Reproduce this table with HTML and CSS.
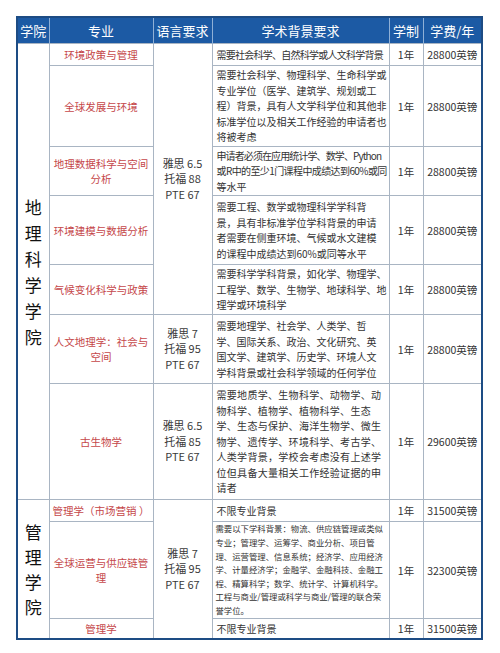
FILE: index.html
```html
<!DOCTYPE html>
<html lang="zh-CN">
<head>
<meta charset="utf-8">
<title>专业申请要求</title>
<link rel="stylesheet" href="styles.css">
</head>
<body>
<div class="frame">
<table class="grid">
<colgroup>
<col class="c-school"><col class="c-major"><col class="c-lang"><col class="c-bg"><col class="c-len"><col class="c-fee">
</colgroup>
<thead>
<tr class="head">
<th class="th-school">学院</th><th>专业</th><th class="th-lang">语言要求</th><th>学术背景要求</th><th>学制</th><th>学费/年</th>
</tr>
</thead>
<tbody>
<tr class="h22">
<td class="school" rowspan="7"><span class="vert">地<br>理<br>科<br>学<br>学<br>院</span></td>
<td class="major">环境政策与管理</td>
<td class="lang" rowspan="5">雅思 6.5<br>托福 88<br>PTE 67</td>
<td class="bg"><span class="tight">需要社会科学、自然科学或人文科学背景</span></td>
<td class="len">1年</td><td class="fee">28800英镑</td>
</tr>
<tr class="h81">
<td class="major">全球发展与环境</td>
<td class="bg">需要社会科学、物理科学、生命科学或<br>专业学位（医学、建筑学、规划或工<br>程）背景，具有人文学科学位和其他非<br>标准学位以及相关工作经验的申请者也<br>将被考虑</td>
<td class="len">1年</td><td class="fee">28800英镑</td>
</tr>
<tr class="h49">
<td class="major">地理数据科学与空间<br>分析</td>
<td class="bg"><span class="tight2">申请者必须在应用统计学、数学、Python</span><br><span class="tight3">或R中的至少1门课程中成绩达到60%或同</span><br>等水平</td>
<td class="len">1年</td><td class="fee">28800英镑</td>
</tr>
<tr class="h69">
<td class="major">环境建模与数据分析</td>
<td class="bg">需要工程、数学或物理科学学科背<br>景，具有非标准学位学科背景的申请<br>者需要在侧重环境、气候或水文建模<br>的课程中成绩达到60%或同等水平</td>
<td class="len">1年</td><td class="fee">28800英镑</td>
</tr>
<tr class="h50">
<td class="major">气候变化科学与政策</td>
<td class="bg">需要科学学科背景，如化学、物理学、<br>工程学、数学、生物学、地球科学、地<br>理学或环境科学</td>
<td class="len">1年</td><td class="fee">28800英镑</td>
</tr>
<tr class="h69">
<td class="major">人文地理学：社会与<br>空间</td>
<td class="lang">雅思 7<br>托福 95<br>PTE 67</td>
<td class="bg">需要地理学、社会学、人类学、哲<br>学、国际关系、政治、文化研究、英<br>国文学、建筑学、历史学、环境人文<br>学科背景或社会科学领域的任何学位</td>
<td class="len">1年</td><td class="fee">28800英镑</td>
</tr>
<tr class="h116">
<td class="major">古生物学</td>
<td class="lang">雅思 6.5<br>托福 85<br>PTE 67</td>
<td class="bg wide">需要地质学、生物科学、动物学、动<br>物科学、植物学、植物科学、生态<br>学、生态与保护、海洋生物学、微生<br>物学、遗传学、环境科学、考古学、<br>人类学背景，学校会考虑没有上述学<br>位但具备大量相关工作经验证据的申<br>请者</td>
<td class="len">1年</td><td class="fee">29600英镑</td>
</tr>
<tr class="h22 split">
<td class="school" rowspan="3"><span class="vert vert-mgmt">管<br>理<br>学<br>院</span></td>
<td class="major">管理学（市场营销 ）</td>
<td class="lang" rowspan="3">雅思 7<br>托福 95<br>PTE 67</td>
<td class="bg">不限专业背景</td>
<td class="len">1年</td><td class="fee">31500英镑</td>
</tr>
<tr class="h97">
<td class="major">全球运营与供应链管<br>理</td>
<td class="bg small">需要以下学科背景：物流、供应链管理或类似<br>专业；管理学、运筹学、商业分析、项目管<br>理、运营管理、信息系统；经济学、应用经济<br>学、计量经济学；金融学、金融科技、金融工<br>程、精算科学；数学、统计学、计算机科学。<br>工程与商业/管理或科学与商业/管理的联合荣<br>誉学位。</td>
<td class="len">1年</td><td class="fee">32300英镑</td>
</tr>
<tr class="h20">
<td class="major">管理学</td>
<td class="bg">不限专业背景</td>
<td class="len">1年</td><td class="fee">31500英镑</td>
</tr>
</tbody>
</table>
</div>
</body>
</html>
```

FILE: styles.css
```css
html, body {
  margin: 0;
  padding: 0;
  background: #ffffff;
}
body {
  padding: 16px 0 0 16px;
  font-family: "Noto Sans CJK SC", "Noto Sans", sans-serif;
  color: #333333;
}
.frame {
  width: 463px;
  border: 2px solid #1d4c84;
  background: #ffffff;
}
.grid {
  width: 463px;
  table-layout: fixed;
  border-collapse: collapse;
  border-style: hidden;
}
.c-school { width: 31px; }
.c-major { width: 104px; }
.c-lang { width: 59px; }
.c-bg { width: 177px; }
.c-len { width: 34px; }
.c-fee { width: 58px; }

.grid td {
  border: 1px solid #a9b5c3;
  padding: 0;
  vertical-align: middle;
  text-align: center;
}
.head th {
  height: 25px;
  padding: 0;
  background: #1c5aa4;
  color: #ffffff;
  font-weight: normal;
  font-size: 13px;
  line-height: 25px;
  border-left: 1px solid #8fb0d6;
  text-align: center;
  white-space: nowrap;
}
.head th:first-child { border-left: none; }
.th-school { text-align: left; padding-left: 2px; }
.th-lang { text-align: left; padding-left: 3px; }

.h22 td { height: 21px; }
.h81 td { height: 80px; }
.h49 td { height: 48px; }
.h69 td { height: 68px; }
.h50 td { height: 49px; }
.h116 td { height: 115px; }
.h97 td { height: 96px; }
.h20 td { height: 19px; }

.grid .school {
  color: #111111;
  font-size: 17px;
  line-height: 26px;
}
.vert { display: inline-block; }
.vert-mgmt { line-height: 25px; }

.major {
  color: #c5474a;
  font-size: 10.5px;
  line-height: 15px;
}
.lang {
  font-size: 11px;
  line-height: 15.5px;
  color: #3a3a3a;
}
.grid .bg {
  text-align: left;
  padding: 0 0 0 4px;
  font-size: 10px;
  line-height: 15.5px;
  white-space: nowrap;
  overflow: hidden;
}
.grid .bg.wide { letter-spacing: 0.3px; }
.grid .bg.small {
  font-size: 8.4px;
  line-height: 13.6px;
  padding-left: 3px;
}
.tight { letter-spacing: -0.75px; }
.tight2 { letter-spacing: -0.9px; }
.tight3 { letter-spacing: -0.6px; }
.len {
  font-size: 10.5px;
}
.fee {
  font-size: 10.5px;
  white-space: nowrap;
}
```
